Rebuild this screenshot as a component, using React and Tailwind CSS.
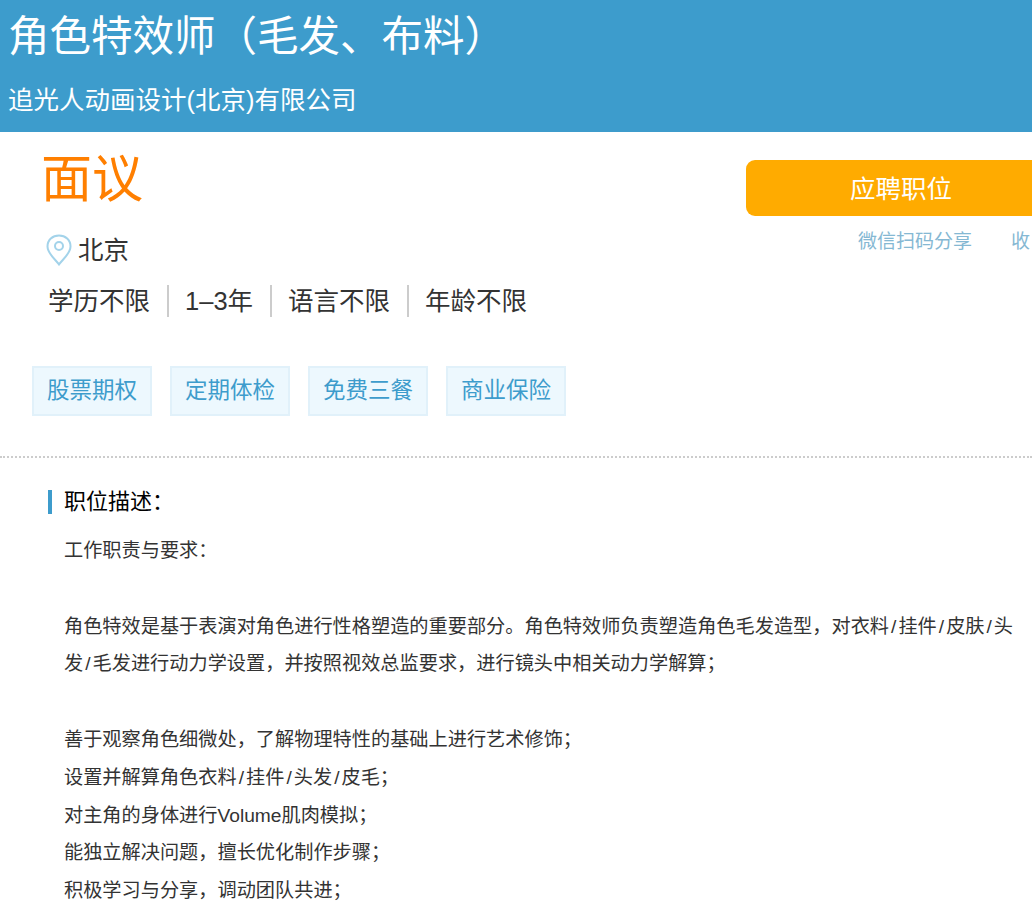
import React from "react";

const cjk = "font-['Liberation_Sans','Noto_Sans_CJK_SC',sans-serif]";

const requirements = ["学历不限", "1–3年", "语言不限", "年龄不限"];
const perks = ["股票期权", "定期体检", "免费三餐", "商业保险"];

function PinIcon() {
  return (
    <svg width="26" height="32" viewBox="0 0 26 32" fill="none" stroke="#a3d3ea" strokeWidth="2">
      <path d="M13 30.5 C9 25 1.5 19.5 1.5 12.5 C1.5 6 6.5 1.5 13 1.5 C19.5 1.5 24.5 6 24.5 12.5 C24.5 19.5 17 25 13 30.5 Z" />
      <circle cx="13" cy="12" r="4" />
    </svg>
  );
}

// slashes sit wider in the original font
function Line({ text, className }) {
  const parts = text.split("/");
  return (
    <p className={className}>
      {parts.map((part, i) => (
        <React.Fragment key={i}>
          {i > 0 && <span className="px-[2px]">/</span>}
          {part}
        </React.Fragment>
      ))}
    </p>
  );
}

export default function App() {
  return (
    <div className={`${cjk} w-[1032px] h-[918px] overflow-hidden bg-white text-[#333]`}>
      {/* header */}
      <div className="h-[132px] bg-[#3d9ccc] pl-[8px] text-white">
        <h1 className="pt-[13px] text-[41.5px] leading-[48px] font-normal whitespace-nowrap">角色特效师（毛发、布料）</h1>
        <p className="mt-[23px] text-[25.5px] leading-[32px] whitespace-nowrap">追光人动画设计(北京)有限公司</p>
      </div>

      <div className="flex h-[326px] border-b-2 border-dotted border-[#ccc]">
        <div className="w-[746px] shrink-0">
          <div className="pl-[41px] pt-[15px] text-[51px] leading-[66px] text-[#ff7f00]">面议</div>
          <div className="mt-[20px] flex items-center pl-[46px]">
            <PinIcon />
            <span className="ml-[6px] text-[25.5px] leading-[34px]">北京</span>
          </div>
          <div className="mt-[18px] flex items-center pl-[48px] text-[25.5px] leading-[32px]">
            {requirements.map((item, i) => (
              <span key={item} className={i > 0 ? "border-l-2 border-[#ccc] ml-[16.5px] pl-[16.5px]" : ""}>
                {item}
              </span>
            ))}
          </div>
          <div className="mt-[49px] flex gap-[18px] pl-[32px]">
            {perks.map((item) => (
              <span
                key={item}
                className="flex h-[50px] items-center border-2 border-[#e1f1fa] bg-[#edf8fe] px-[13px] text-[22.5px] text-[#3d9ccc] whitespace-nowrap"
              >
                {item}
              </span>
            ))}
          </div>
        </div>

        <div className="flex-1">
          <button className="mt-[28px] block h-[56px] w-full rounded-l-[9px] bg-[#ffab00] pl-[24px] pt-[3px] text-center text-[25.5px] text-white">
            应聘职位
          </button>
          <div className="mt-[14px] flex pl-[112px] text-[19px] leading-[24px] text-[#85b8d3] whitespace-nowrap">
            <span>微信扫码分享</span>
            <span className="ml-[39px]">收</span>
          </div>
        </div>
      </div>

      {/* job description */}
      <div className="pl-[48px] pt-[32px]">
        <h2 className="border-l-4 border-[#3d9ccc] pl-[12px] text-[22px] leading-[24px] font-normal text-black">职位描述：</h2>
        <div className="mt-[18px] pl-[16px] text-[19.2px] leading-[37.8px] text-[#333] whitespace-nowrap">
          <p>工作职责与要求：</p>
          <Line className="mt-[37.8px]" text="角色特效是基于表演对角色进行性格塑造的重要部分。角色特效师负责塑造角色毛发造型，对衣料/挂件/皮肤/头" />
          <Line text="发/毛发进行动力学设置，并按照视效总监要求，进行镜头中相关动力学解算；" />
          <Line className="mt-[37.8px]" text="善于观察角色细微处，了解物理特性的基础上进行艺术修饰；" />
          <Line text="设置并解算角色衣料/挂件/头发/皮毛；" />
          <Line text="对主角的身体进行Volume肌肉模拟；" />
          <Line text="能独立解决问题，擅长优化制作步骤；" />
          <Line text="积极学习与分享，调动团队共进；" />
        </div>
      </div>
    </div>
  );
}
